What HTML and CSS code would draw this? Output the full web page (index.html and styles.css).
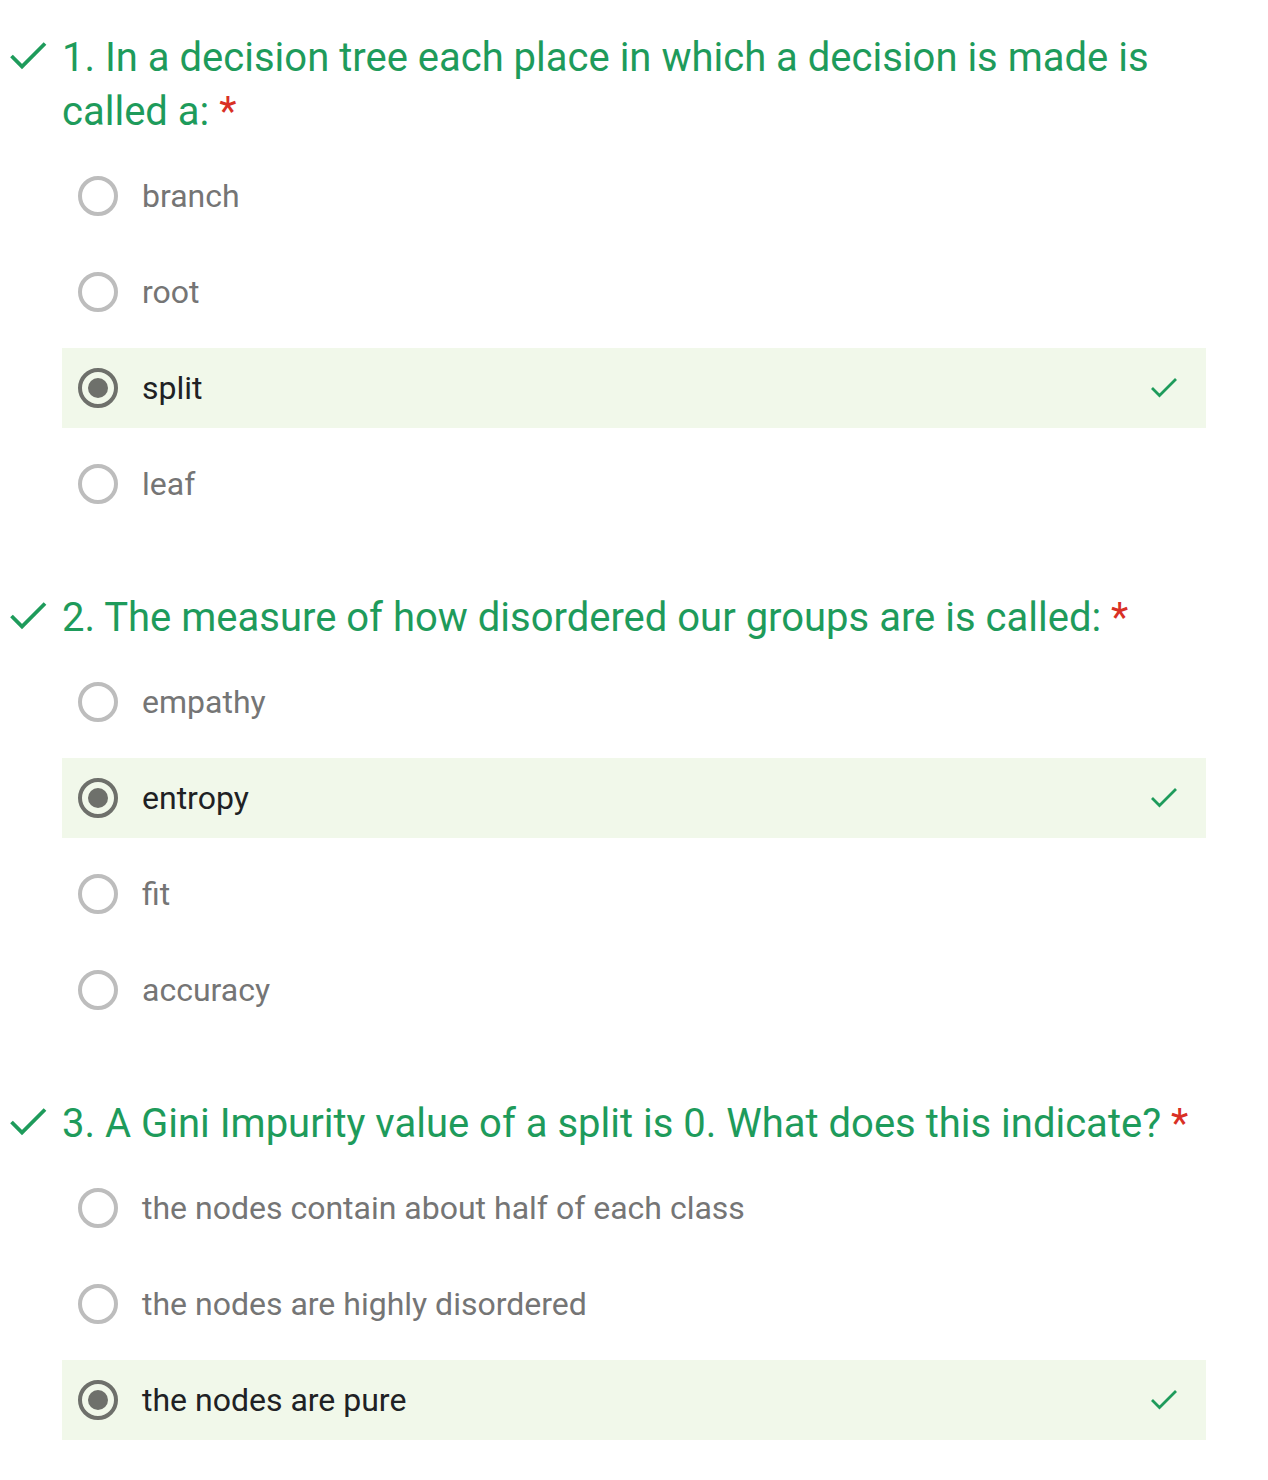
FILE: index.html
```html
<!DOCTYPE html>
<html>
<head>
<meta charset="utf-8">
<link rel="stylesheet" href="styles.css">
</head>
<body>
<div class="quiz">
  <div class="question">
    <div class="q-title">
      <svg class="q-check" width="48" height="40" viewBox="0 0 48 40"><polyline points="3.5,25 14,35.5 37,12.5" fill="none" stroke="#1e9b5b" stroke-width="3.8"/></svg>
      <span>1. In a decision tree each place in which a decision is made is called a: <span class="req">*</span></span>
    </div>
    <div class="options">
      <div class="opt"><span class="radio"></span><span class="label">branch</span></div>
      <div class="opt"><span class="radio"></span><span class="label">root</span></div>
      <div class="opt correct"><span class="radio"></span><span class="label">split</span><svg class="ok" width="28" height="22" viewBox="0 0 28 22"><polyline points="2,11 9.5,18.5 26,2" fill="none" stroke="#1e9b5b" stroke-width="2.8"/></svg></div>
      <div class="opt"><span class="radio"></span><span class="label">leaf</span></div>
    </div>
  </div>
  <div class="question">
    <div class="q-title">
      <svg class="q-check" width="48" height="40" viewBox="0 0 48 40"><polyline points="3.5,25 14,35.5 37,12.5" fill="none" stroke="#1e9b5b" stroke-width="3.8"/></svg>
      <span>2. The measure of how disordered our groups are is called: <span class="req">*</span></span>
    </div>
    <div class="options">
      <div class="opt"><span class="radio"></span><span class="label">empathy</span></div>
      <div class="opt correct"><span class="radio"></span><span class="label">entropy</span><svg class="ok" width="28" height="22" viewBox="0 0 28 22"><polyline points="2,11 9.5,18.5 26,2" fill="none" stroke="#1e9b5b" stroke-width="2.8"/></svg></div>
      <div class="opt"><span class="radio"></span><span class="label">fit</span></div>
      <div class="opt"><span class="radio"></span><span class="label">accuracy</span></div>
    </div>
  </div>
  <div class="question">
    <div class="q-title">
      <svg class="q-check" width="48" height="40" viewBox="0 0 48 40"><polyline points="3.5,25 14,35.5 37,12.5" fill="none" stroke="#1e9b5b" stroke-width="3.8"/></svg>
      <span>3. A Gini Impurity value of a split is 0. What does this indicate? <span class="req">*</span></span>
    </div>
    <div class="options">
      <div class="opt"><span class="radio"></span><span class="label">the nodes contain about half of each class</span></div>
      <div class="opt"><span class="radio"></span><span class="label">the nodes are highly disordered</span></div>
      <div class="opt correct"><span class="radio"></span><span class="label">the nodes are pure</span><svg class="ok" width="28" height="22" viewBox="0 0 28 22"><polyline points="2,11 9.5,18.5 26,2" fill="none" stroke="#1e9b5b" stroke-width="2.8"/></svg></div>
    </div>
  </div>
</div>
</body>
</html>
```
FILE: styles.css
```css
html, body {
  margin: 0;
  padding: 0;
  background: #ffffff;
}
body {
  font-family: Roboto, "Liberation Sans", Arial, sans-serif;
}
.quiz {
  padding: 31px 62px 0 62px;
}
.question {
  margin-bottom: 67px;
}
.q-title {
  position: relative;
  font-size: 40px;
  line-height: 54px;
  color: #1e9b5b;
  margin-bottom: 17px;
}
.q-check {
  position: absolute;
  left: -54px;
  top: 0;
}
.req {
  color: #d93025;
}
.options {
  display: flex;
  flex-direction: column;
  gap: 16px;
}
.opt {
  height: 80px;
  display: flex;
  align-items: center;
  padding: 0 28px 0 16px;
}
.radio {
  width: 32px;
  height: 32px;
  border: 4px solid #bdbdbd;
  border-radius: 50%;
  flex: none;
  position: relative;
}
.label {
  margin-left: 24px;
  font-size: 32px;
  color: #757575;
  flex: 1;
}
.opt.correct {
  background: #f1f8ea;
}
.opt.correct .radio {
  border-color: #6e706b;
}
.opt.correct .radio::after {
  content: "";
  position: absolute;
  left: 6px;
  top: 6px;
  width: 20px;
  height: 20px;
  border-radius: 50%;
  background: #6e706b;
}
.opt.correct .label {
  color: #202124;
}
.ok {
  flex: none;
}
```
